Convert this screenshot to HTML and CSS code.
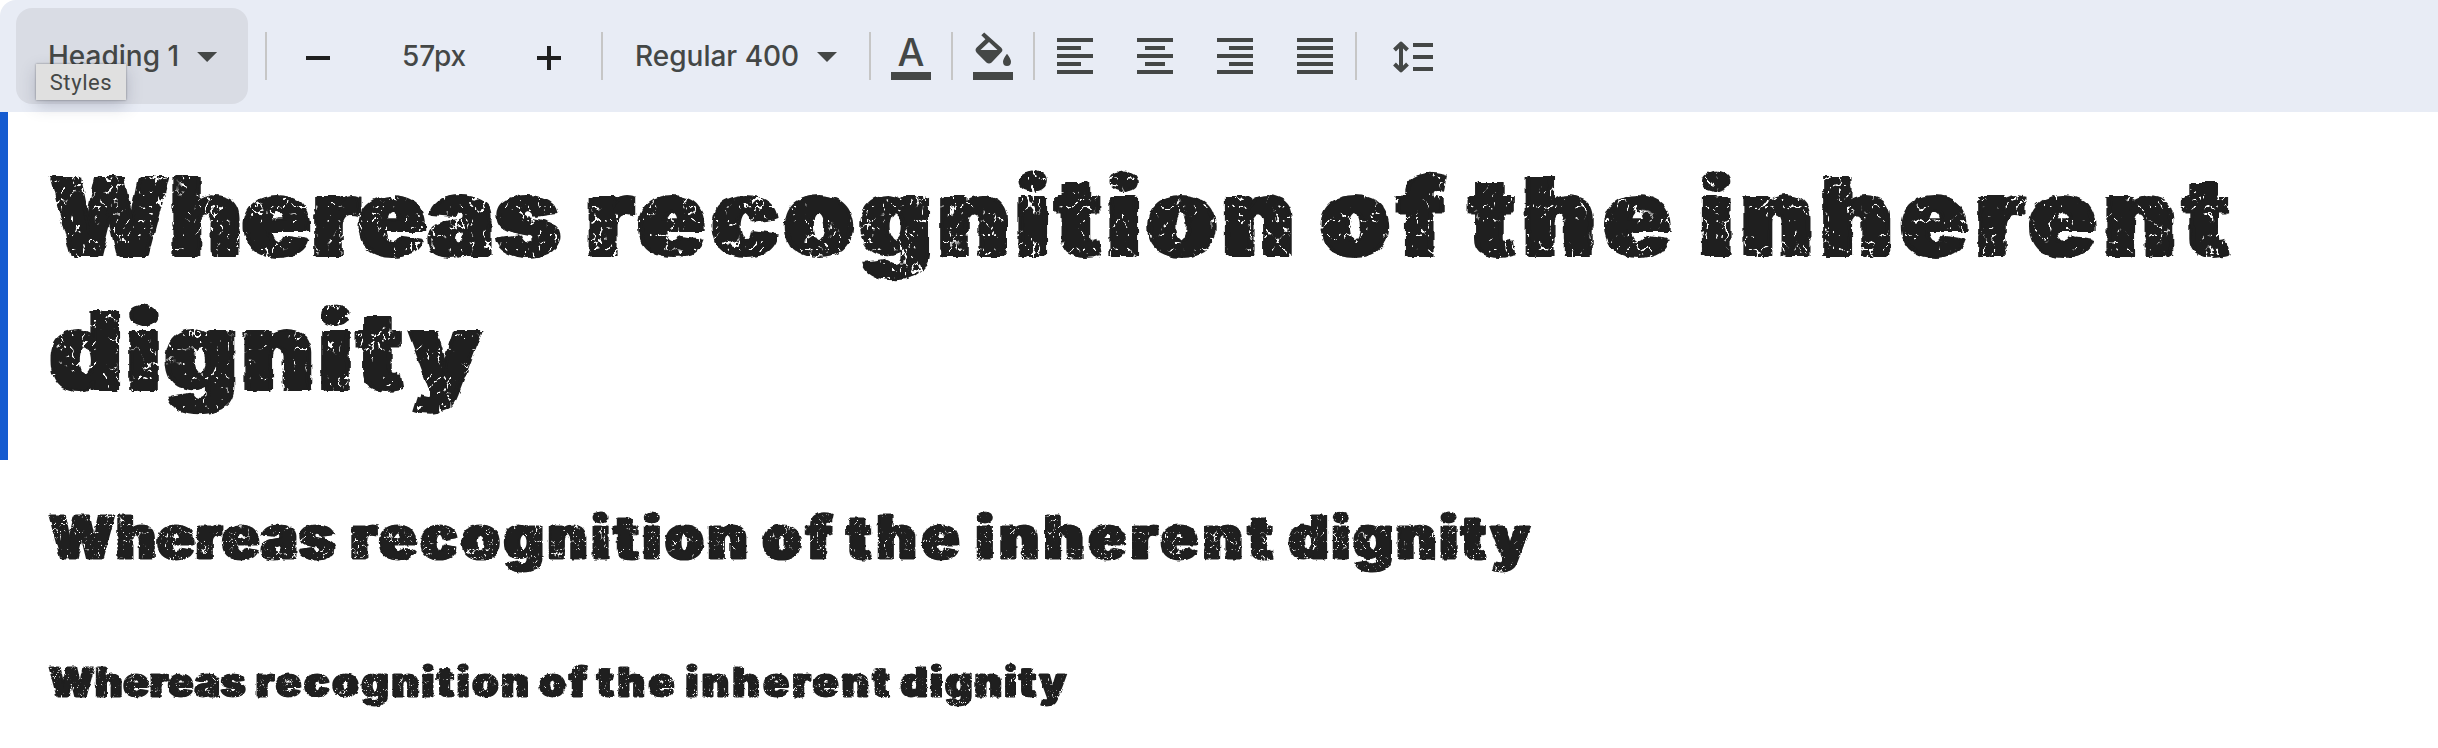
FILE: index.html
```html
<!DOCTYPE html>
<html lang="en">
<head>
<meta charset="utf-8">
<title>Type tester</title>
<link rel="stylesheet" href="styles.css">
</head>
<body>
<svg class="filters" width="0" height="0" aria-hidden="true">
  <filter id="dirt-lg" x="-1%" y="-5%" width="102%" height="110%" color-interpolation-filters="sRGB">
    <feTurbulence type="fractalNoise" baseFrequency="0.1" numOctaves="2" seed="4" result="rough"/>
    <feDisplacementMap in="SourceGraphic" in2="rough" scale="5" xChannelSelector="R" yChannelSelector="G" result="shape"/>
    <feTurbulence type="turbulence" baseFrequency="0.09 0.07" numOctaves="3" seed="11"/>
    <feColorMatrix values="0 0 0 0 0  0 0 0 0 0  0 0 0 0 0  -22 0 0 0 3" result="cracks"/>
    <feTurbulence type="fractalNoise" baseFrequency="0.045" numOctaves="2" seed="7"/>
    <feColorMatrix values="0 0 0 0 0  0 0 0 0 0  0 0 0 0 0  14 0 0 0 -6.4" result="patches"/>
    <feComposite in="cracks" in2="patches" operator="in" result="wear"/>
    <feComposite in="shape" in2="wear" operator="out"/>
  </filter>
  <filter id="dirt-md" x="-1%" y="-5%" width="102%" height="110%" color-interpolation-filters="sRGB">
    <feTurbulence type="fractalNoise" baseFrequency="0.18" numOctaves="2" seed="4" result="rough"/>
    <feDisplacementMap in="SourceGraphic" in2="rough" scale="3" xChannelSelector="R" yChannelSelector="G" result="shape"/>
    <feTurbulence type="turbulence" baseFrequency="0.16 0.12" numOctaves="2" seed="11"/>
    <feColorMatrix values="0 0 0 0 0  0 0 0 0 0  0 0 0 0 0  -16 0 0 0 1.6" result="cracks"/>
    <feTurbulence type="fractalNoise" baseFrequency="0.06" numOctaves="2" seed="7"/>
    <feColorMatrix values="0 0 0 0 0  0 0 0 0 0  0 0 0 0 0  14 0 0 0 -6.4" result="patches"/>
    <feComposite in="cracks" in2="patches" operator="in" result="wear"/>
    <feComposite in="shape" in2="wear" operator="out"/>
  </filter>
  <filter id="dirt-sm" x="-1%" y="-5%" width="102%" height="110%" color-interpolation-filters="sRGB">
    <feTurbulence type="fractalNoise" baseFrequency="0.25" numOctaves="2" seed="4" result="rough"/>
    <feDisplacementMap in="SourceGraphic" in2="rough" scale="2.5" xChannelSelector="R" yChannelSelector="G" result="shape"/>
    <feTurbulence type="turbulence" baseFrequency="0.23 0.17" numOctaves="2" seed="11"/>
    <feColorMatrix values="0 0 0 0 0  0 0 0 0 0  0 0 0 0 0  -12 0 0 0 1.2" result="cracks"/>
    <feTurbulence type="fractalNoise" baseFrequency="0.09" numOctaves="2" seed="7"/>
    <feColorMatrix values="0 0 0 0 0  0 0 0 0 0  0 0 0 0 0  14 0 0 0 -6.4" result="patches"/>
    <feComposite in="cracks" in2="patches" operator="in" result="wear"/>
    <feComposite in="shape" in2="wear" operator="out"/>
  </filter>
</svg>

<header class="toolbar">
  <button class="style-picker"><span>Heading 1</span><i class="caret"></i><span class="tooltip">Styles</span></button>
  <i class="sep sep-style"></i>
  <button class="step minus"><svg width="24" height="24"><path d="M0 12h24" stroke="#1f1f1f" stroke-width="4"/></svg></button>
  <span class="size">57px</span>
  <button class="step plus"><svg width="24" height="24"><path d="M0 12h24M12 0v24" stroke="#1f1f1f" stroke-width="4"/></svg></button>
  <i class="sep sep-size"></i>
  <button class="weight"><span>Regular 400</span><i class="caret"></i></button>
  <i class="sep sep-weight"></i>
  <button class="swatch"><span class="letter">A</span></button>
  <i class="sep sep-color"></i>
  <button class="swatch"><svg width="40" height="34" viewBox="0 0 40 34" fill="#444746"><path d="M8.3 3.2 11.2.4 28.3 15.7Q30.5 18 28.3 20.3L18.6 30.4Q16 32.6 13.4 30.4L3.7 20.7Q1.4 18 3.7 15.6L12.4 7.2ZM16 10 7.5 18H24.5ZM34 21.8Q38 27 38 29.8A4 4.2 0 0 1 30 29.8Q30 27 34 21.8Z"/></svg></button>
  <i class="sep sep-fill"></i>
  <div class="aligns">
    <svg width="36" height="36"><path d="M0 2h36M0 10h24M0 18h36M0 26h24M0 34h36"/></svg>
    <svg width="36" height="36"><path d="M0 2h36M8 10h20M0 18h36M8 26h20M0 34h36"/></svg>
    <svg width="36" height="36"><path d="M0 2h36M12 10h24M0 18h36M12 26h24M0 34h36"/></svg>
    <svg width="36" height="36"><path d="M0 2h36M0 10h36M0 18h36M0 26h36M0 34h36"/></svg>
  </div>
  <i class="sep sep-align"></i>
  <svg class="line-height" width="40" height="32"><path d="M20 4h20M20 16h20M20 28h20M8 3v26M1.5 9 8 2.6 14.5 9M1.5 23 8 29.4 14.5 23"/></svg>
</header>

<main>
  <section class="block selected">
    <h1><span class="w1">Whereas</span> <span class="w2">recognition</span> <span class="w3">of</span> <span class="w4">the</span> <span class="w5">inherent</span> <span class="w6">dignity</span></h1>
  </section>
  <section class="block">
    <h2><span class="w1">Whereas</span> <span class="w2">recognition</span> <span class="w3">of</span> <span class="w4">the</span> <span class="w5">inherent</span> <span class="w6">dignity</span></h2>
  </section>
  <section class="block">
    <h3><span class="w1">Whereas</span> <span class="w2">recognition</span> <span class="w3">of</span> <span class="w4">the</span> <span class="w5">inherent</span> <span class="w6">dignity</span></h3>
  </section>
</main>
</body>
</html>
```
FILE: styles.css
```css
* { box-sizing: border-box; }
body {
  margin: 0;
  height: 748px;
  overflow: hidden;
  background: #fff;
  color: #444746;
  font-family: Inter, sans-serif;
}
.filters { position: absolute; }
button {
  display: flex;
  align-items: center;
  padding: 0;
  border: 0;
  background: none;
  color: inherit;
  font: inherit;
}
svg { display: block; flex: none; }

/* Toolbar */
.toolbar {
  display: flex;
  align-items: center;
  height: 112px;
  padding-left: 16px;
  background: #e8ecf5;
  border-top-left-radius: 16px;
  font-size: 28px;
  font-weight: 500;
  line-height: 36px;
  white-space: nowrap;
}
.style-picker {
  position: relative;
  width: 232px;
  height: 96px;
  padding-left: 32px;
  border-radius: 16px;
  background: #d9dce4;
}
.caret {
  width: 20px;
  height: 10px;
  margin-top: 2px;
  background: #444746;
  clip-path: polygon(0 0, 100% 0, 50% 100%);
}
.style-picker .caret { margin-left: 18px; }
.tooltip {
  position: absolute;
  left: 20px;
  top: 56px;
  width: 90px;
  height: 36px;
  background: #e0e0e0;
  box-shadow: 0 0 2px rgba(0, 0, 0, .4), 0 6px 16px rgba(60, 64, 90, .25);
  font: 400 22px/38px Roboto, sans-serif;
  letter-spacing: .6px;
  text-align: center;
}
.sep { width: 2px; height: 48px; background: #c6c6c6; }
.sep-style { margin-left: 17px; }
.minus { margin: 4px 0 0 39px; }
.size { width: 66px; margin-left: 72px; }
.plus { margin: 4px 0 0 69px; }
.sep-size { margin-left: 40px; }
.weight { width: 202px; margin-left: 32px; justify-content: space-between; }
.sep-weight { margin-left: 32px; }
.swatch {
  width: 40px;
  height: 48px;
  margin: 0 20px;
  justify-content: center;
  align-items: flex-start;
  border-bottom: 8px solid #444746;
}
.letter { font-size: 38px; font-weight: 500; line-height: 41px; }
.aligns { display: flex; gap: 44px; margin: 0 22px; }
.aligns svg, .line-height { fill: none; stroke: #444746; stroke-width: 4; }
.line-height { margin: 2px 0 0 36px; stroke-linejoin: round; }

/* Specimen text */
.block { padding-left: 49px; }
.selected { height: 348px; padding: 38px 0 0 43px; border-left: 8px solid #155bd0; }
h1, h2, h3 {
  margin: 0;
  color: #1f1f1f;
  font-weight: 900;
  -webkit-text-stroke: .02em #1f1f1f;
  text-shadow: .035em 0 #1f1f1f, -.035em 0 #1f1f1f;
}
h1 { font-size: 108px; line-height: 134px; filter: url(#dirt-lg); }
h2 { margin-top: 40px; font-size: 60.7px; line-height: 75px; filter: url(#dirt-md); white-space: nowrap; }
h3 { margin-top: 81px; font-size: 41.7px; line-height: 52px; filter: url(#dirt-sm); white-space: nowrap; }

/* Word widths and tracking, relative to the heading size */
h1 span, h2 span, h3 span { display: inline-block; white-space: nowrap; }
.w1 { width: 4.765em; letter-spacing: .028em; }
.w2 { width: 6.597em; letter-spacing: .074em; }
.w3 { width: 1.181em; letter-spacing: .09em; }
.w4 { width: 1.932em; letter-spacing: .095em; }
.w5 { width: 4.955em; letter-spacing: .089em; }
.w6 { letter-spacing: .062em; }
```
